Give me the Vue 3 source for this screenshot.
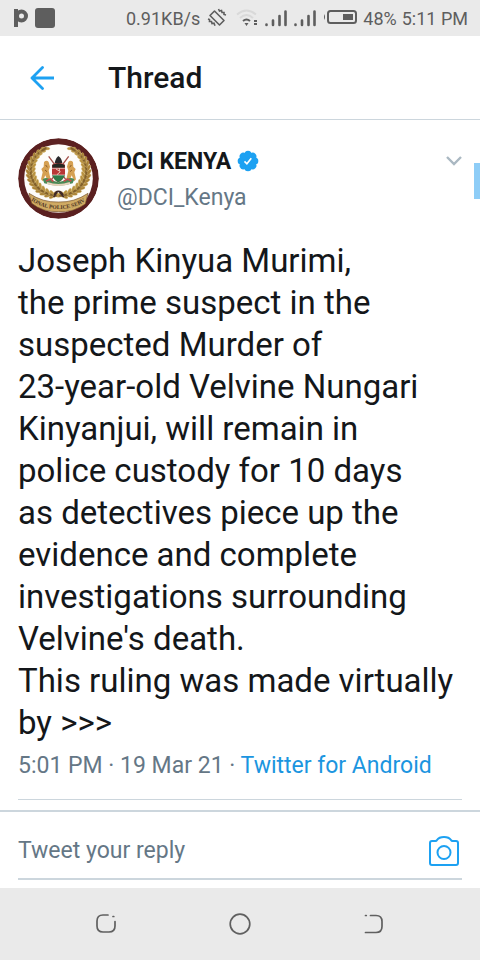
<script setup>
import { ref } from 'vue'

const reply = ref('')

const lines = [
  'Joseph Kinyua Murimi,',
  'the prime suspect in the',
  'suspected Murder of',
  '23-year-old Velvine Nungari',
  'Kinyanjui, will remain in',
  'police custody for 10 days',
  'as detectives piece up the',
  'evidence and complete',
  'investigations surrounding',
  "Velvine's death.",
  'This ruling was made virtually',
  'by >>>',
]

// Laurel leaves of the crest, one side; the other side is mirrored.
const leaves = []
for (let i = 0; i < 15; i++) {
  const deg = 98 + i * 10
  const a = (deg * Math.PI) / 180
  const cx = 146 + 84 * Math.cos(a)
  const cy = 122 + 75 * Math.sin(a)
  leaves.push({ cx: cx - 7, cy: cy + 3, rot: deg + 55, fill: '#a98135' })
  leaves.push({ cx: cx + 7, cy: cy - 3, rot: deg + 125, fill: '#b8913f' })
  leaves.push({ cx, cy, rot: deg + 90, fill: '#82602a' })
}
</script>

<template>
  <div class="screen">
    <div class="status">
      <svg class="glyph" width="14" height="20" viewBox="0 0 14 20" aria-hidden="true">
        <path d="M0 1h4v18H0z" fill="#5e5e5e" />
        <circle cx="7.500" cy="8" r="4.500" fill="none" stroke="#5e5e5e" stroke-width="4" />
      </svg>
      <span class="block"></span>
      <span class="speed">0.91KB/s</span>
      <svg class="vibrate" width="20" height="20" viewBox="0 0 20 20" fill="none" stroke="#5e5e5e" stroke-width="1.600" aria-hidden="true">
        <path d="M7.500 3L17 12.500L12.500 17L3 7.500Z" stroke-linejoin="round" />
        <path d="M11.500 1l1 2 2-.5.5 2 2 0 0 2 2 .5M1 11l1.500 .5 0 2 2 0 .5 2 2-.3 1 2.500" />
      </svg>
      <svg class="wifi" width="22" height="20" viewBox="0 0 22 20" fill="none" aria-hidden="true">
        <path d="M1 6.500Q10.500-1.500 20 6.500M4 10Q10.500 4 17 10" stroke="#d9d9d9" stroke-width="2" />
        <path d="M7 13Q10.500 10 14 13" stroke="#5e5e5e" stroke-width="2" />
        <path d="M8.500 15h4l-2 3zM18 12h3v2h-3zM18 15h3v2h-3z" fill="#5e5e5e" />
      </svg>
      <svg v-for="n in 2" :key="n" class="signal" width="22" height="20" viewBox="0 0 22 20" aria-hidden="true">
        <path d="M1.500 16.500v.5M8 12.500v4.500M14.500 8v9M20.500 3.500v13.500" stroke="#5e5e5e" stroke-width="2.600" stroke-linecap="round" />
      </svg>
      <svg class="battery" width="34" height="16" viewBox="0 0 34 16" aria-hidden="true">
        <rect x="5" y="1" width="28" height="12" rx="2.500" fill="none" stroke="#5e5e5e" stroke-width="2" />
        <path d="M20 4h10v6H20zM2 4v6q-2-3 0-6z" fill="#5e5e5e" />
      </svg>
      <span class="percent">48%</span>
      <span>5:11 PM</span>
    </div>

    <header class="header">
      <button class="icon-button" type="button" aria-label="Back">
        <svg width="24" height="24" viewBox="0 0 24 24" fill="none" stroke="#1da1f2" stroke-width="2.800">
          <path d="M24 12H2M12.500 1.500L2 12L12.500 22.500" stroke-linejoin="round" stroke-linecap="round" />
        </svg>
      </button>
      <h1 class="title">Thread</h1>
    </header>

    <main>
      <article class="tweet">
        <div class="author">
          <svg class="avatar" width="81" height="81" viewBox="24 24 243 243" role="img" aria-label="DCI Kenya crest">
            <circle cx="145.500" cy="145.500" r="121" fill="#5b2020" />
            <circle cx="145.500" cy="145.500" r="103" fill="#fdfcfa" />
            <g v-for="side in 2" :key="side" :transform="side === 2 ? 'translate(291 0) scale(-1 1)' : undefined">
              <ellipse v-for="(l, i) in leaves" :key="i" :cx="l.cx" :cy="l.cy" rx="11" ry="4.500" :fill="l.fill" stroke="#d9bd78" stroke-width="1" :transform="`rotate(${l.rot} ${l.cx} ${l.cy})`" />
            </g>
            <path d="M116 79L167 148M176 79L125 148" stroke="#a3504a" stroke-width="4" />
            <path d="M102 96q8-8 14 0l4 14-4 12 8 34h-10l-8-20-8 18-5-6 5-21-4-10 7-7z" fill="#d5a052" />
            <path d="M189 96q-8-8-14 0l-4 14 4 12-8 34h10l8-20 8 18 5-6-5-21 4-10-7-7z" fill="#d5a052" />
            <path d="M107 105l5 7M105 120l6 5M184 105l-5 7M186 120l-6 5" stroke="#8a5c28" stroke-width="3" />
            <path d="M126 104q20-12 39 0v31q-7 17-20 22q-12-5-19-22z" fill="#b93737" />
            <path d="M127 105q18-10 37 0v8h-37z" fill="#242822" />
            <path d="M126 135h39q-6 15-20 22q-13-7-19-22z" fill="#2f7c4a" />
            <path d="M126 115h39M126 135h39" stroke="#f2e9df" stroke-width="2" />
            <path d="M138 117l13 8-10 9M148 114v9" fill="none" stroke="#eee2cf" stroke-width="2.500" />
            <path d="M134 99q3-15 11-21q10 6 12 21z" fill="#29282a" />
            <path d="M98 148q12-9 24 2l23 7 24-7q12-11 24-2l-5 12q-42 14-85 0z" fill="#4b8955" />
            <path d="M108 153l14-6 8 8M161 154l11-7 12 6" fill="none" stroke="#c34c4b" stroke-width="5" />
            <path d="M111 159q34 12 69 0" fill="none" stroke="#e4d2ba" stroke-width="6" />
            <path d="M133 196q3-12 12-12q10 0 14 12M141 186l-10 15M149 186l12 15" fill="none" stroke="#3f2928" stroke-width="5" />
            <path d="M57 190Q99 218 145 216Q192 218 234 190L226 222Q190 248 145 245Q99 247 65 220Z" fill="#cfaa63" stroke="#765028" stroke-width="2" />
            <path id="motto-path" d="M63 211Q100 238 145 237Q192 238 229 211" fill="none" />
            <text class="motto"><textPath href="#motto-path">IONAL POLICE SERV</textPath></text>
          </svg>
          <div class="names">
            <div class="name-row">
              <strong class="name">DCI KENYA</strong>
              <svg width="22" height="22" viewBox="0 0 20 20" role="img" aria-label="Verified">
                <g fill="#1da1f2">
                  <circle cx="10" cy="10" r="8" />
                  <circle v-for="a in 8" :key="a" cx="10" cy="3.800" r="3.200" :transform="`rotate(${a * 45} 10 10)`" />
                </g>
                <path d="M6.800 10.300l2.200 2.200 4-5" fill="none" stroke="#fff" stroke-width="1.500" />
              </svg>
            </div>
            <a class="handle" href="#">@DCI_Kenya</a>
          </div>
          <button class="icon-button more" type="button" aria-label="More options">
            <svg width="16" height="10" viewBox="0 0 16 10" fill="none">
              <path d="M1 1L8 8L15 1" stroke="#aab8c2" stroke-width="2.400" />
            </svg>
          </button>
        </div>

        <p class="body">
          <template v-for="line in lines" :key="line">{{ line }}<br /></template>
        </p>
        <p class="meta">5:01 PM · 19 Mar 21 · <a class="source" href="#">Twitter for Android</a></p>
      </article>

      <form class="reply" @submit.prevent>
        <div class="field">
          <input v-model="reply" class="input" type="text" placeholder="Tweet your reply" aria-label="Tweet your reply" />
          <button class="icon-button" type="button" aria-label="Add photo">
            <svg width="32" height="32" viewBox="0 0 32 32" fill="none" stroke="#1da1f2" stroke-width="2">
              <path d="M4 6H7.500Q8.500 6 9 5Q11 2 16 2Q21 2 23 5Q23.500 6 24.500 6H28Q30 6 30 8V28Q30 30 28 30H4Q2 30 2 28V8Q2 6 4 6Z" />
              <circle cx="16" cy="17.500" r="6.500" />
            </svg>
          </button>
        </div>
      </form>
      <span class="scroll-thumb"></span>
    </main>

    <nav class="system-nav" aria-label="System">
      <button class="icon-button" type="button" aria-label="Recent apps">
        <svg width="22" height="22" viewBox="0 0 22 22" fill="none" stroke="#606060" stroke-width="1.700" stroke-linecap="round">
          <path d="M13 2H8Q2 2 2 8V13Q2 19 8 19H14Q20 19 20 13V8.500M18 3.500h.8" />
        </svg>
      </button>
      <button class="icon-button" type="button" aria-label="Home">
        <svg width="22" height="22" viewBox="0 0 22 22" fill="none" stroke="#606060" stroke-width="1.700">
          <circle cx="11" cy="11" r="9.800" />
        </svg>
      </button>
      <button class="icon-button" type="button" aria-label="Go back">
        <svg width="22" height="22" viewBox="0 0 22 22" fill="none" stroke="#606060" stroke-width="1.700" stroke-linecap="round">
          <path d="M7.500 2.500H13Q19 2.500 19 8.500V13.500Q19 19.500 13 19.500H2.500M2.500 2.500h.8" />
        </svg>
      </button>
    </nav>
  </div>
</template>

<style>
body {
  margin: 0;
  background: #fff;
}
</style>

<style scoped>
.screen {
  display: flex;
  flex-direction: column;
  min-height: 100vh;
  background: #fff;
  color: #14171a;
  font-family: Roboto, sans-serif;
}
.screen * {
  box-sizing: border-box;
}
svg {
  display: block;
  flex: none;
}
.icon-button {
  display: flex;
  padding: 0;
  border: 0;
  background: none;
  cursor: pointer;
}
.status {
  display: flex;
  align-items: center;
  height: 36px;
  padding: 0 12px 0 14px;
  background: #eaeaea;
  color: #5e5e5e;
  font-size: 18px;
  white-space: nowrap;
}
.block {
  width: 20px;
  height: 20px;
  margin-left: 7px;
  border-radius: 3px;
  background: #5e5e5e;
}
.speed {
  margin-left: auto;
}
.vibrate {
  margin-left: 7px;
}
.wifi {
  margin-left: 9px;
}
.signal {
  margin-left: 7px;
}
.battery {
  margin-left: 7px;
}
.percent {
  margin: 0 5px 0 6px;
}
.header {
  display: flex;
  align-items: center;
  gap: 54px;
  height: 84px;
  padding: 0 30px;
  border-bottom: 1px solid #ccd6dd;
}
.title {
  margin: 0;
  font-size: 30px;
  font-weight: 500;
}
main {
  position: relative;
  flex: 1;
}
.tweet {
  margin: 0 18px;
  padding: 18px 0 15px;
  border-bottom: 1px solid #ccd6dd;
}
.author {
  display: flex;
  align-items: flex-start;
  gap: 18px;
}
.avatar {
  border-radius: 50%;
}
.motto {
  fill: #4d3426;
  font-family: "Liberation Serif", serif;
  font-size: 17px;
  font-weight: 700;
}
.names {
  flex: 1;
  padding-top: 5px;
}
.name-row {
  display: flex;
  align-items: center;
  gap: 6px;
  height: 36px;
}
.name {
  font-size: 23px;
  font-weight: 700;
}
.handle {
  color: #657786;
  font-size: 23px;
  line-height: 38px;
  text-decoration: none;
}
.more {
  padding-top: 18px;
}
.body {
  margin: 21px 0 0;
  font-size: 33px;
  line-height: 42px;
  white-space: nowrap;
}
.meta {
  margin: 4px 0 0;
  color: #657786;
  font-size: 23px;
  line-height: 36px;
  white-space: nowrap;
}
.source {
  color: #1b95e0;
  text-decoration: none;
}
.reply {
  margin-top: 10px;
  padding: 12px 18px 8px;
  border-top: 2px solid #ccd6dd;
}
.field {
  display: flex;
  align-items: center;
  height: 56px;
  padding-right: 2px;
  border-bottom: 2px solid #ccd6dd;
}
.input {
  flex: 1;
  min-width: 0;
  padding: 0;
  border: 0;
  outline: 0;
  background: none;
  color: #14171a;
  font: 23px/36px Roboto, sans-serif;
}
.input::placeholder {
  color: #657786;
  opacity: 1;
}
.scroll-thumb {
  position: absolute;
  top: 43px;
  right: 0;
  width: 6px;
  height: 36px;
  background: #8ecdf7;
}
.system-nav {
  display: flex;
  flex: none;
  justify-content: center;
  align-items: center;
  gap: 112px;
  height: 72px;
  background: #eaeaea;
}
</style>
